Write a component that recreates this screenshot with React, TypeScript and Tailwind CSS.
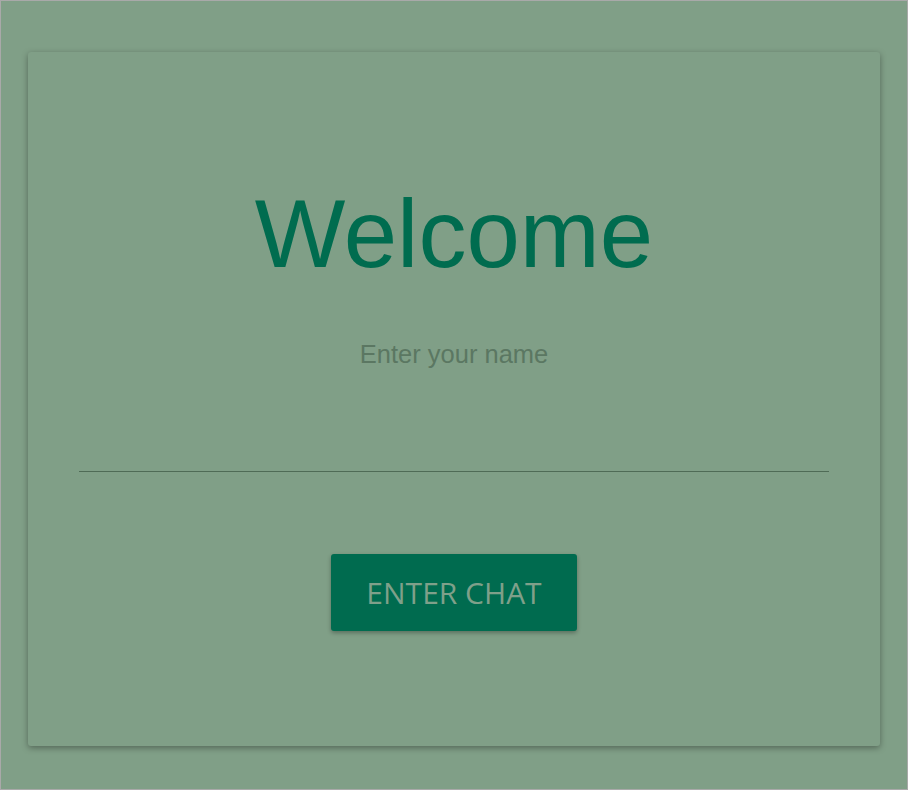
export default function App() {
  return (
    <div className="h-[790px] w-[908px] border border-[#a9a9a9] bg-[#809f87] px-[27px] pt-[51px]">
      <div className="flex h-[694px] flex-col items-center rounded-[3px] bg-[#809f87] px-[51px] pt-[134px] shadow-[0_2px_6px_rgba(0,0,0,0.35)]">
        <h1 className="text-[96px] leading-none text-[#006c4f] [font-family:'Liberation_Sans',Arial,sans-serif]">
          Welcome
        </h1>
        <label className="mt-[60px] text-[25.5px] leading-none text-[#5b7762] [font-family:'Liberation_Sans',Arial,sans-serif]">
          Enter your name
        </label>
        <input
          type="text"
          className="mt-[84px] h-[20px] w-full border-b border-[#4f6b56] bg-transparent outline-none"
        />
        <button className="mt-[82px] h-[77px] w-[246px] rounded-[3px] bg-[#006b4f] text-[30px] text-[#7fa08a] shadow-[0_2px_4px_rgba(0,0,0,0.3)] [font-family:'Open_Sans',sans-serif]">
          ENTER CHAT
        </button>
      </div>
    </div>
  );
}
